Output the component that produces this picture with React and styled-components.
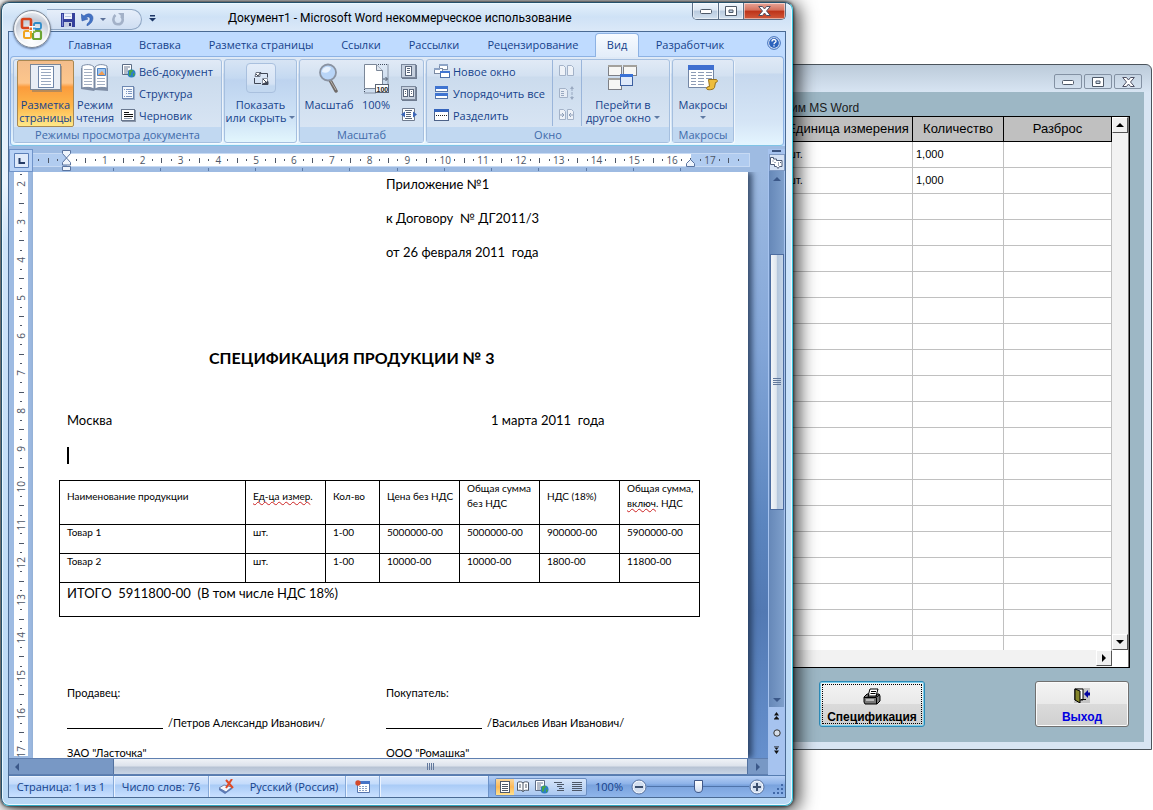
import React from 'react';
import styled, { createGlobalStyle, css } from 'styled-components';

const UI = "'Open Sans', 'Noto Sans', sans-serif";
const CAPTION = "Roboto, 'Open Sans', sans-serif";
const DOC = "Lato, 'Open Sans', sans-serif";
const ARIAL = "'Liberation Sans', Arial, sans-serif";

const GlobalStyle = createGlobalStyle`
  * { box-sizing: border-box; }
  body { margin: 0; background: #fff; }
  button { border: 0; padding: 0; margin: 0; background: none; font: inherit; color: inherit; }
  svg { display: block; flex: none; }
  p, h1, h2 { margin: 0; }
`;

const Desktop = styled.div`
  position: relative;
  height: 100vh;
  overflow: hidden;
  background: #fff;
`;

/* ---------- order window (behind) ---------- */

const OrderWindow = styled.section`
  position: absolute;
  left: 640px;
  right: 1px;
  top: 64px;
  bottom: 60px;
  display: flex;
  flex-direction: column;
  border: 1px solid #4b545c;
  border-radius: 6px 6px 0 0;
  background: linear-gradient(#bccbda, #d8e5f3 28px);
  padding: 0 7px 7px;
  font-family: ${ARIAL};
`;

const OrderCaption = styled.header`
  display: flex;
  justify-content: flex-end;
  gap: 2px;
  height: 27px;
  padding: 9px 2px 3px;
`;

const FrameButton = styled.button`
  display: flex;
  align-items: center;
  justify-content: center;
  width: 28px;
  border: 1px solid #8391a3;
  border-radius: 2px;
`;

const OrderBody = styled.div`
  flex: 1;
  min-height: 0;
  display: flex;
  flex-direction: column;
  background: #9db7c5;
  padding: 8px 14px 15px 0;
`;

const OrderLabel = styled.h2`
  padding-left: 143px;
  font-size: 12px;
  font-weight: normal;
  line-height: 16px;
  color: #1a1a1a;
`;

const GridFrame = styled.div`
  flex: 1;
  min-height: 0;
  display: flex;
  border: 1px solid #000;
  background: #fff;
`;

const GridMain = styled.div`
  flex: 1;
  display: flex;
  flex-direction: column;
  min-width: 0;
`;

const GridClip = styled.div`
  flex: 1;
  min-height: 0;
  overflow: hidden;
`;

const OrderGrid = styled.table`
  width: 100%;
  border-collapse: collapse;
  table-layout: fixed;
  th {
    height: 24px;
    padding: 0;
    background: #c0c0c0;
    border: solid #000;
    border-width: 0 1px 1px 0;
    font-size: 13px;
    font-weight: normal;
    white-space: nowrap;
  }
  td {
    height: 26px;
    padding: 0 3px;
    border: solid #c0c0c0;
    border-width: 0 1px 1px 0;
    font-size: 11px;
  }
`;

const OrderCol = styled.col`
  width: ${p => p.$w}px;
`;

const ClassicTrack = styled.div`
  display: flex;
  justify-content: flex-end;
  background: #f2f2f2;
  ${p =>
    p.$vertical
      ? css`
          flex: 1;
        `
      : css`
          height: 17px;
        `}
`;

const ClassicColumn = styled.div`
  display: flex;
  flex-direction: column;
  width: 17px;
  border-right: 1px solid #777;
`;

const ClassicCorner = styled.div`
  height: 17px;
  background: #fff;
`;

const ClassicArrow = styled.button`
  display: flex;
  align-items: center;
  justify-content: center;
  width: 16px;
  height: 16px;
  background: #f0f0f0;
  border: solid;
  border-width: 1px;
  border-color: #fff #555 #555 #fff;
`;

const OrderActions = styled.footer`
  display: flex;
  justify-content: space-between;
  padding: 13px 1px 0 171px;
`;

const ActionButton = styled.button`
  display: flex;
  flex-direction: column;
  align-items: center;
  justify-content: space-between;
  width: ${p => p.$w}px;
  height: 46px;
  padding: 6px 0 1px;
  border: 1px solid ${p => (p.$focus ? '#2c89b5' : '#707070')};
  border-radius: 3px;
  background: linear-gradient(#f4f4f4, #e9e9e9 50%, #dadada 51%, #d0d0d0);
  box-shadow: inset 0 0 0 1px ${p => (p.$focus ? '#7bd0ee' : '#fbfbfb')};
  outline: ${p => (p.$focus ? '1px dotted #000' : 'none')};
  outline-offset: -4px;
  color: ${p => p.$color};
  font-size: 12px;
  font-weight: bold;
  line-height: 16px;
`;

/* ---------- word window ---------- */

const WordWindow = styled.section`
  position: absolute;
  left: 1px;
  right: 360px;
  top: 2px;
  bottom: 4px;
  display: flex;
  flex-direction: column;
  border: 1px solid #24506b;
  border-right-color: #35c3dc;
  border-bottom-color: #2fa6c0;
  border-radius: 8px;
  padding: 0 6px 7px;
  background: linear-gradient(#e4f0fb 0, #cfe2f6 14px, #dbe9f8 28px, #eaf3fc 180px, #cfe4fa 240px, #b9d8f5 100%);
  box-shadow: inset 0 0 0 1px #e9f8ff, 0 0 3px 1px rgba(0, 0, 0, 0.6), 4px 3px 18px 2px rgba(0, 0, 0, 0.75);
  font-family: ${UI};
  font-size: 11px;
  color: #15428b;
`;

const TitleBar = styled.header`
  display: flex;
  align-items: flex-start;
  height: 28px;
`;

const QuickAccess = styled.div`
  display: flex;
  align-items: center;
  gap: 6px;
  height: 21px;
  width: 95px;
  margin: 6px 0 0 39px;
  padding-left: 14px;
  border: 1px solid #8fa6c3;
  border-left: 0;
  border-radius: 0 11px 11px 0;
  background: linear-gradient(#e6eefa, #cfdef2);
`;

const ToolButton = styled.button`
  display: flex;
  align-items: center;
  justify-content: center;
`;

const QatMore = styled(ToolButton)`
  margin: 12px 0 0 7px;
`;

const Title = styled.h1`
  flex: 1;
  padding: 7px 0 0 72px;
  font-family: ${CAPTION};
  font-size: 12px;
  font-weight: normal;
  line-height: 16px;
  white-space: nowrap;
  color: #000;
`;

const CaptionButtons = styled.div`
  display: flex;
  height: 17px;
  border: 1px solid #5b6e85;
  border-top: 0;
  border-radius: 0 0 5px 5px;
  overflow: hidden;
`;

const CaptionButton = styled.button`
  display: flex;
  align-items: center;
  justify-content: center;
  width: ${p => (p.$close ? 42 : 25)}px;
  border-left: ${p => (p.$first ? 0 : 1)}px solid #5b6e85;
  background: ${p =>
    p.$close
      ? 'linear-gradient(#e8a598, #d4705c 45%, #bd3218 50%, #d0593c)'
      : 'linear-gradient(#eef4fb, #dbe6f2 45%, #b9cbdf 50%, #d3e1ef)'};
  box-shadow: inset 0 0 0 1px rgba(255, 255, 255, 0.5);
`;

const Client = styled.div`
  flex: 1;
  min-height: 0;
  display: flex;
  flex-direction: column;
  border: 1px solid #4a6a93;
  background: #bfdbff;
`;

const OfficeButton = styled.button`
  position: absolute;
  left: 11px;
  top: 7px;
  width: 38px;
  height: 38px;
  display: flex;
  align-items: center;
  justify-content: center;
  border: 1px solid #7e8794;
  border-radius: 50%;
  background: radial-gradient(circle at 50% 85%, #fff, #eef1f5 35%, #c5cbd6 62%, #f2f5f9 90%);
  box-shadow: 0 1px 2px rgba(30, 50, 90, 0.6), inset 0 0 0 2px rgba(255, 255, 255, 0.7);
`;

const Tabs = styled.nav`
  display: flex;
  height: 24px;
  padding-left: 46px;
  align-items: stretch;
`;

const Tab = styled.button`
  width: ${p => p.$w}px;
  white-space: nowrap;
  ${p =>
    p.$active &&
    css`
      margin: 1px 2px -1px;
      padding-bottom: 2px;
      border: 1px solid #8db2e3;
      border-bottom: 0;
      border-radius: 4px 4px 0 0;
      background: linear-gradient(#f7fbff, #e3edf9);
      z-index: 1;
    `}
`;

const HelpButton = styled(ToolButton)`
  margin: 0 4px 3px auto;
`;

const Ribbon = styled.div`
  display: flex;
  gap: 2px;
  height: 90px;
  margin: 0 1px;
  padding: 2px;
  border: 1px solid #8db2e3;
  border-bottom-color: #7fc4e6;
  border-radius: 4px;
  background: linear-gradient(#dfe9f6, #d3e1f1 16px, #c6d8ee 17px, #d5e5f6 65px, #e4f5ff);
`;

const Group = styled.section`
  display: flex;
  flex-direction: column;
  width: ${p => p.$w}px;
  border: 1px solid #a5bfdf;
  border-radius: 3px;
  box-shadow: 1px 1px 0 rgba(255, 255, 255, 0.6);
  background: ${p =>
    p.$collapsed
      ? 'linear-gradient(#d7e4f4, #c4d9f1 18px, #bdd3ef 20px, #cfe3f6 60px, #e2f6fd)'
      : 'linear-gradient(#e1eaf6, #d3e1f1 16px, #cbdbed 17px, #dbe7f5)'};
`;

const GroupBody = styled.div`
  flex: 1;
  display: flex;
  align-items: flex-start;
  padding: 0 3px;
`;

const GroupCaption = styled.h2`
  height: 15px;
  font-size: 11px;
  font-weight: normal;
  line-height: 15px;
  text-align: center;
  white-space: nowrap;
  color: #3e6aaa;
  background: #c1d8f1;
`;

const BigButton = styled.button`
  display: flex;
  flex-direction: column;
  align-items: center;
  width: ${p => p.$w}px;
  height: 67px;
  line-height: 13px;
  white-space: nowrap;
  border: 1px solid ${p => (p.$on ? '#a98852' : 'transparent')};
  border-radius: 2px;
  background: ${p =>
    p.$on ? 'linear-gradient(#f3bd8b, #fdc68c 22px, #fb9b3c 26px, #fdb74b 45px, #ffe888)' : 'none'};
`;

const IconSlot = styled.span`
  display: flex;
  align-items: center;
  justify-content: center;
  height: 37px;
  padding-bottom: 3px;
`;

const ShowHideBox = styled.span`
  display: flex;
  align-items: center;
  justify-content: center;
  width: 30px;
  height: 30px;
  border: 1px solid #a9c0de;
  border-radius: 4px;
  background: linear-gradient(#e4edf9, #d4e2f4 20px, #c3d8f0 22px);
`;

const ButtonLine = styled.span`
  display: flex;
  align-items: center;
  gap: 3px;
  height: 13px;
`;

const SmallList = styled.div`
  display: flex;
  flex-direction: column;
  margin-left: ${p => p.$ml}px;
`;

const SmallButton = styled.button`
  display: flex;
  align-items: center;
  gap: 3px;
  height: 22px;
  white-space: nowrap;
`;

const DividedList = styled(SmallList)`
  padding: 0 6px;
  border: solid #9ab5da;
  border-width: 0 1px;
`;

const Caret = styled.span`
  width: 0;
  height: 0;
  border: solid transparent;
  border-width: 3px 3px 0;
  border-top-color: ${p => p.$color || '#5f7aa3'};
`;

/* ---------- work area ---------- */

const Workspace = styled.div`
  flex: 1;
  min-height: 0;
  display: flex;
  padding-top: 3px;
  background: #9ebbe2;
`;

const DocColumn = styled.div`
  flex: 1;
  min-width: 0;
  display: flex;
  flex-direction: column;
`;

const RulerRow = styled.div`
  display: flex;
  height: 23px;
  color: #3d4a5e;
`;

const TabSelector = styled.button`
  display: flex;
  align-items: center;
  justify-content: center;
  width: 24px;
  border: 1px solid #6f93c9;
  background: #b8d2f6;
`;

const RulerBody = styled.div`
  flex: 1;
  display: flex;
  flex-direction: column;
  padding-top: 4px;
  position: relative;
`;

const RulerScale = styled.div`
  display: flex;
  width: 717px;
  height: 14px;
  padding: 0 6px 0 1px;
  border: 1px solid #c7daf4;
  border-left: 0;
  background: linear-gradient(90deg, #b1ccf0 34px, #fff 34px, #fff 658px, #b1ccf0 658px);
`;

const VerticalScale = styled.div`
  display: flex;
  flex-direction: column;
  width: 14px;
  height: 586px;
  margin: -2px 0 0 5px;
  background: #fff;
`;

const Mark = styled.span`
  flex: 1;
  min-width: 0;
  min-height: 0;
  display: flex;
  align-items: center;
  justify-content: center;
  font-size: 10px;
  line-height: 12px;
  color: #4d5666;
  i {
    background: #4d5666;
    width: ${p => (p.$vertical ? p.$len : 1)}px;
    height: ${p => (p.$vertical ? 1 : p.$len)}px;
  }
  b {
    font-weight: normal;
    ${p => p.$vertical && 'writing-mode: vertical-rl; transform: rotate(180deg);'}
  }
`;

const TabStops = styled.div`
  display: flex;
  width: 614px;
  height: 3px;
  margin: 1px 0 0 34px;
  span {
    flex: 1;
    border-right: 1px solid #5d7ba8;
  }
`;

const IndentMarker = styled.span`
  position: absolute;
  left: ${p => p.$x}px;
  top: ${p => p.$y}px;
`;

const DocArea = styled.div`
  flex: 1;
  min-height: 0;
  display: flex;
  overflow: hidden;
  background: linear-gradient(#9ebbe2, #83a6d8 30%, #5b85bf 60%, #5279b3 75%, #6690cd);
`;

const VerticalRuler = styled.div`
  width: 24px;
  overflow: hidden;
  background: #9ebbe2;
`;

const Page = styled.article`
  flex: 1;
  margin-right: 20px;
  padding: 0 34px;
  background: #fff;
  box-shadow: 4px 0 6px rgba(30, 50, 80, 0.8);
  font-family: ${DOC};
  font-size: 13px;
  line-height: 24px;
  color: #000;
  white-space: pre;
`;

const Appendix = styled.div`
  display: grid;
  gap: 10px;
  margin-left: 319px;
`;

const DocTitle = styled.h1`
  margin: 82px 0 38px;
  padding-left: 142px;
  font-size: 16px;
  font-weight: bold;
`;

const PlaceDate = styled.div`
  display: grid;
  grid-template-columns: 424px 1fr;
`;

const TextCursor = styled.div`
  width: 2px;
  height: 17px;
  margin: 15px 0 16px;
  background: #000;
`;

const SpecTable = styled.table`
  width: 640px;
  margin-left: -8px;
  border-collapse: collapse;
  table-layout: fixed;
  font-size: 10px;
  line-height: 15px;
  text-align: left;
  th, td {
    padding: 0 0 0 7px;
    border: 1px solid #000;
    font-weight: normal;
  }
  th {
    height: 43px;
    padding-bottom: 13px;
  }
  td {
    height: 29px;
    vertical-align: top;
  }
  tfoot td {
    height: 34px;
    font-size: 13px;
    line-height: 20px;
  }
`;

const Col = styled.col`
  width: ${p => p.$w}px;
`;

const Misspelled = styled.span`
  text-decoration: underline wavy #c22 1px;
  text-underline-offset: 1px;
  text-decoration-skip-ink: none;
`;

const Signatures = styled.div`
  display: grid;
  grid-template-columns: 319px 1fr;
  margin-top: 61px;
  font-size: 11px;
  line-height: 30px;
`;

const SignLine = styled.span`
  display: inline-block;
  width: 96px;
  margin-right: 5px;
  border-bottom: 1px solid #000;
  height: 10px;
  vertical-align: -2px;
`;

/* ---------- scroll bars ---------- */

const HScroll = styled.div`
  display: flex;
  align-items: stretch;
  height: 17px;
  border: 1px solid #5f7fb0;
  border-width: 1px 0;
  background: #7898c5;
`;

const ScrollArrow = styled.button`
  display: flex;
  align-items: center;
  justify-content: center;
  width: ${p => p.$w || 16}px;
  height: ${p => p.$h || 15}px;
`;

const HThumb = styled.div`
  flex: 1;
  display: flex;
  align-items: center;
  justify-content: center;
  margin-left: 88px;
  border: 1px solid #52719f;
  border-width: 0 1px;
  background: linear-gradient(#f0f3f7, #dde3ec 45%, #b7c3d4 55%, #c9d5e5);
`;

const VColumn = styled.div`
  width: 17px;
  display: flex;
  flex-direction: column;
  align-items: center;
  padding-top: 1px;
  background: #a6c3ef;
`;

const SplitBar = styled.span`
  width: 9px;
  height: 2px;
  margin-bottom: 2px;
  background: #3b5480;
`;

const RulerToggle = styled.button`
  display: flex;
  align-items: center;
  justify-content: center;
  width: 16px;
  height: 17px;
  border: 1px solid #7f9ac4;
  background: #d5e2f5;
`;

const VTrack = styled.div`
  flex: 1;
  display: flex;
  flex-direction: column;
  align-items: center;
  width: 15px;
  background: linear-gradient(90deg, #6688b8, #7e9fcb);
`;

const VThumb = styled.div`
  width: 14px;
  height: 256px;
  margin: 68px 0 auto;
  display: flex;
  align-items: center;
  justify-content: center;
  border: 1px solid #4c6ca0;
  background: linear-gradient(90deg, #f2f5f9, #dfe6ee 45%, #b4c6dc 50%, #c5d5e8);
`;

const StatusBar = styled.footer`
  display: flex;
  align-items: stretch;
  height: 22px;
  border-top: 1px solid #567db1;
  box-shadow: inset 0 1px 0 #e9f2ff;
  background: linear-gradient(#d9e8fc, #c4dbfb 8px, #a9cbf6 9px, #c9e0ff);
`;

const StatusItem = styled.button`
  display: flex;
  align-items: center;
  justify-content: center;
  width: ${p => p.$w}px;
  white-space: nowrap;
  border-right: ${p => (p.$plain ? 0 : 1)}px solid #86a9d8;
  box-shadow: ${p => (p.$plain ? 'none' : '1px 0 0 #eaf3ff')};
`;

const StatusTools = styled.div`
  display: flex;
  align-items: center;
  margin-left: auto;
  padding-left: 6px;
  border-left: 1px solid #6c93c9;
  background: linear-gradient(#b5cff5, #8db2e8 8px, #79a2dd 9px, #8fb5ea);
`;

const ViewButtons = styled.div`
  display: flex;
  height: 18px;
  border: 1px solid #6b8ec2;
  border-radius: 2px;
  background: linear-gradient(#d6e5fa, #aac8f0);
`;

const ViewButton = styled.button`
  display: flex;
  align-items: center;
  justify-content: center;
  width: 18px;
  background: ${p => (p.$on ? 'linear-gradient(#fbd79a, #fdb956 50%, #ffe18d)' : 'none')};
`;

const ZoomValue = styled.button`
  width: 44px;
`;

const ZoomRange = styled.input`
  appearance: none;
  width: 102px;
  height: 14px;
  margin: 0;
  background: linear-gradient(#4f74ab, #4f74ab) center / 100% 1px no-repeat;
  &::-webkit-slider-thumb {
    appearance: none;
    width: 9px;
    height: 13px;
    border: 1px solid #41598a;
    border-radius: 1px 1px 5px 5px;
    background: linear-gradient(#fff, #cfdcf0);
  }
`;

const ResizeGrip = styled.span`
  display: flex;
  align-self: flex-end;
  padding: 0 1px 2px 8px;
`;

/* ---------- icons ---------- */

const OfficeLogo = () => (
  <svg width="24" height="24" viewBox="0 0 24 24" fill="none">
    <rect x="2" y="2" width="9" height="9" rx="1.5" stroke="#d8431c" strokeWidth="2.6" />
    <rect x="14" y="6" width="7" height="6" rx="1.5" stroke="#2d8bc9" strokeWidth="1.8" />
    <rect x="4" y="14" width="7" height="7" rx="1.5" stroke="#f0a31c" strokeWidth="2" />
    <rect x="13" y="14" width="8" height="8" rx="1.5" stroke="#6da534" strokeWidth="2.2" />
    <rect x="9" y="9" width="6" height="7" fill="#fff" />
    <path d="M9.5 10.5h2.5v2.5h-2.5z" fill="#e86b2a" />
    <path d="M13 10.5h2.5v2H13z" fill="#4a9ad2" />
    <path d="M9.5 14h2.5v2h-2.5z" fill="#f3b63a" />
    <path d="M13 13.7h2.5V16H13z" fill="#85b44b" />
  </svg>
);

const SaveIcon = () => (
  <svg width="14" height="14" viewBox="0 0 14 14" shapeRendering="crispEdges">
    <path d="M0 0h13l1 1v13H0z" fill="#34409c" />
    <path d="M1 1h1v12H1z" fill="#7b86d4" />
    <path d="M3 0h8v6H3z" fill="#eef2fb" />
    <path d="M3 0h8v1H3zM4 3h6v1H4z" fill="#b7c3df" />
    <path d="M3 9h8v5H3z" fill="#c5cce0" />
    <path d="M8 10h2v3H8z" fill="#2a3375" />
  </svg>
);

const UndoIcon = () => (
  <svg width="13" height="13" viewBox="0 0 13 13">
    <path d="M0 1l1 7 6-2-2-1c2-2 4-1 4 1s-1 3-3 5v2c4-2 6-5 6-8 0-4-5-6-9-2z" fill="#4372c4" stroke="#2b54a4" strokeWidth=".5" />
  </svg>
);

const RedoIcon = () => (
  <svg width="13" height="13" viewBox="0 0 13 13" fill="none">
    <path d="M3.500 2C0 5 1 11.300 6 11.300S12 5.500 9 3" stroke="#a3b1c8" strokeWidth="2.600" />
    <path d="M6 0h6v6z" fill="#a3b1c8" />
  </svg>
);

const MoreIcon = () => (
  <svg width="7" height="7" viewBox="0 0 7 7">
    <path d="M1 0h5v1.500H1zM0 3h7L3.500 6.500z" fill="#1d3767" />
  </svg>
);

const MinimizeIcon = () => (
  <svg width="12" height="6" viewBox="0 0 12 6">
    <rect x=".5" y="1.500" width="11" height="4" rx="1" fill="#fff" stroke="#4e5968" />
  </svg>
);

const MaximizeIcon = () => (
  <svg width="12" height="10" viewBox="0 0 12 10">
    <path fillRule="evenodd" d="M.5.5h11v9H.5zM4 4v2.500h4V4z" fill="#fff" stroke="#4e5968" />
  </svg>
);

const CloseIcon = () => (
  <svg width="13" height="10" viewBox="0 0 13 10">
    <path d="M.7.5h3.800l2 2.500 2-2.500h3.800L8.500 5l3.800 4.500H8.500l-2-2.500-2 2.500H.7L4.500 5z" fill="#fff" stroke="#4e5063" />
  </svg>
);

const HelpIcon = () => (
  <svg width="14" height="14" viewBox="0 0 14 14">
    <circle cx="7" cy="7" r="6.300" fill="#e6effc" stroke="#3566b5" />
    <circle cx="7" cy="7" r="4.900" fill="#2c62bd" />
    <path d="M5 5.500c0-2.600 4-2.600 4-.3C9 6.600 7 6.600 7 8.200M7 9.200v1.300" fill="none" stroke="#fff" strokeWidth="1.300" />
  </svg>
);

const PageLayoutIcon = () => (
  <svg width="32" height="28" viewBox="0 0 32 28" shapeRendering="crispEdges">
    <path d="M2 2h30v26H2z" fill="#8a7c6b" opacity=".6" />
    <path d="M.5.5h30v25H.5z" fill="#e9eef5" stroke="#7a8798" />
    <path d="M8.500 2.500h15v21h-15z" fill="#fff" stroke="#6f86a8" />
    <path d="M11 5.500h10M11 8.500h10M11 11.500h10M11 14.500h10M11 17.500h10M11 20.500h10" stroke="#9aa9c0" />
  </svg>
);

const ReadingIcon = () => (
  <svg width="30" height="28" viewBox="0 0 30 28">
    <path d="M1 4v21l13 2 1-1 13 1V4z" fill="#7f8ea6" />
    <path d="M2 2c4-2 9-2 12 1v22c-3-2-8-2-12-1z" fill="#fff" stroke="#7889a3" />
    <path d="M15 3c3-3 8-3 12-1v22c-4-1-9-1-12 1z" fill="#fff" stroke="#7889a3" />
    <path d="M4 5.500h8M4 8.500h8M4 11.500h8M4 14.500h8M4 17.500h8M4 20.500h8M17 14.500h8M17 17.500h8M17 20.500h8" stroke="#a3afc2" />
    <path d="M17.500 4.500h8v7h-8z" fill="#9fc6f0" stroke="#4d83c4" />
    <path d="M18 11l4-4 3 4z" fill="#f19c50" />
  </svg>
);

const WebIcon = () => (
  <svg width="15" height="14" viewBox="0 0 15 14">
    <path d="M1.500.5h9v10h-9z" fill="#fff" stroke="#5c6c86" />
    <path d="M3 3h6M3 5h4M3 7h5M3 9h3" stroke="#6a7892" />
    <circle cx="10.500" cy="9.500" r="4" fill="#2b7fc4" />
    <path d="M8 7c2-2 4-1 4 0l-2 2v2l-2 1zM12 9l2 1-2 3z" fill="#47a447" />
  </svg>
);

const OutlineIcon = () => (
  <svg width="15" height="14" viewBox="0 0 15 14" shapeRendering="crispEdges">
    <path d="M1.500.5h11v12h-11z" fill="#f4f8fd" stroke="#6d87b1" />
    <path d="M13 1h1v13H2v-1h11z" fill="#9fb0cc" />
    <path d="M3 3.500h1M5 3.500h6M5 5.500h1M7 5.500h4M5 7.500h1M7 7.500h4M3 10.500h1M5 10.500h6" stroke="#7f97c0" />
  </svg>
);

const DraftIcon = () => (
  <svg width="15" height="14" viewBox="0 0 15 14" shapeRendering="crispEdges">
    <path d="M.5 1.500h13v11H.5z" fill="#fff" stroke="#69788f" />
    <path d="M14 2h1v12H1v-1h13z" fill="#8b97aa" />
    <path d="M3 4.500h5M3 6.500h9M3 8.500h9" stroke="#111" />
    <path d="M3 10.500h8" stroke="#8b97aa" />
  </svg>
);

const ShowHideIcon = () => (
  <svg width="16" height="15" viewBox="0 0 16 15" fill="none" stroke="#3f4655">
    <path d="M7 2.500h7.500v4M1.500 7v5.500H8" />
    <path d="M3 1.500h4v4H2z" fill="#fff" stroke="#6d7584" />
    <path d="M3 3l2 2 3-4" />
    <path d="M9.500 7.500h5v5h-5z" fill="#fff" stroke="#8a92a0" />
    <path d="M10 8l4 4M9 13.500h6v-3z" fill="#3f4655" />
  </svg>
);

const ZoomIcon = () => (
  <svg width="22" height="30" viewBox="0 0 22 30">
    <path d="M12 17l6 11" stroke="#6f6a68" strokeWidth="3.500" strokeLinecap="round" />
    <path d="M12 17l6 10" stroke="#b9b4ae" strokeWidth="1" />
    <circle cx="10" cy="9.500" r="8" fill="#b9d5f7" stroke="#8a93a2" strokeWidth="1.800" />
    <path d="M4 9c0-4 5-7 9-4-1 4-5 6-9 4z" fill="#e8f2fe" />
  </svg>
);

const HundredIcon = () => (
  <svg width="27" height="31" viewBox="0 0 27 31">
    <path d="M15 1.500h10v20M1.500 24v6h11" fill="none" stroke="#3f4a5c" strokeDasharray="1 1" />
    <path d="M1.500 1.500h12l6 6v18h-18z" fill="#fff" stroke="#7b8798" />
    <path d="M13.500 1.500v6h6" fill="#dfe6ef" stroke="#7b8798" />
    <path d="M20 16h4M22.500 14l2 2-2 2" stroke="#4b5668" fill="none" />
    <rect x="12.500" y="21.500" width="13" height="8" fill="#fff" stroke="#5a6576" />
    <text x="13.500" y="28.500" fontFamily="Liberation Sans, sans-serif" fontSize="7" fontWeight="bold" fill="#222">100</text>
  </svg>
);

const OnePageIcon = () => (
  <svg width="16" height="15" viewBox="0 0 16 15" shapeRendering="crispEdges">
    <path d="M.5.5h14v13H.5z" fill="#c6d0de" stroke="#7b889c" />
    <path d="M15 1h1v14H1v-1h14z" fill="#6f7c90" />
    <path d="M4.500 2.500h6v9h-6z" fill="#fff" stroke="#59667b" />
    <path d="M6 4.500h3M6 6.500h3M6 8.500h3" stroke="#59667b" />
  </svg>
);

const TwoPagesIcon = () => (
  <svg width="16" height="15" viewBox="0 0 16 15" shapeRendering="crispEdges">
    <path d="M.5.5h14v13H.5z" fill="#c6d0de" stroke="#7b889c" />
    <path d="M15 1h1v14H1v-1h14z" fill="#6f7c90" />
    <path d="M2.500 3.500h4v7h-4zM8.500 3.500h4v7h-4z" fill="#fff" stroke="#59667b" />
    <path d="M4 5.500h1M4 7.500h1M10 5.500h1M10 7.500h1" stroke="#59667b" />
  </svg>
);

const PageWidthIcon = () => (
  <svg width="16" height="14" viewBox="0 0 16 14">
    <path d="M1.500.5h12v12h-12z" fill="#fff" stroke="#6f7b8e" />
    <path d="M4 2.500h7M4 10.500h7M5 4.500h5M5 6.500h5M5 8.500h5" stroke="#59667b" />
    <path d="M0 6.500l4-3v6zM16 6.500l-4-3v6z" fill="#3b66b8" />
  </svg>
);

const NewWindowIcon = () => (
  <svg width="16" height="15" viewBox="0 0 16 15" shapeRendering="crispEdges">
    <path d="M5.500.5h8v5h-8z" fill="#fff" stroke="#7c8ba3" />
    <path d="M.5 4.500h8v5h-8z" fill="#fff" stroke="#7c8ba3" />
    <path d="M6.500 7.500h9v6h-9z" fill="#fff" stroke="#4a6ea9" />
    <path d="M6 7h10v2H6z" fill="#3f74d1" />
    <path d="M5 0h9v2H5zM0 4h6v2H0z" fill="#8ea4c6" />
  </svg>
);

const ArrangeIcon = () => (
  <svg width="16" height="14" viewBox="0 0 16 14" shapeRendering="crispEdges">
    <path d="M1.500.5h12v5h-12zM1.500 7.500h12v5h-12z" fill="#fff" stroke="#5876a8" />
    <path d="M1 0h13v3H1zM1 7h13v3H1z" fill="#3f74d1" />
  </svg>
);

const SplitIcon = () => (
  <svg width="16" height="13" viewBox="0 0 16 13" shapeRendering="crispEdges">
    <path d="M.5.5h14v11H.5z" fill="#fff" stroke="#4d6288" />
    <path d="M0 0h15v3H0z" fill="#3565bd" />
    <path d="M2 6.500h12" stroke="#222" strokeDasharray="1 1" />
  </svg>
);

const SideBySideIcon = () => (
  <svg width="16" height="12" viewBox="0 0 16 12">
    <path d="M.5.5h4l2 2v8h-6zM8.500.5h4l2 2v8h-6z" fill="#eef2f8" stroke="#a3b2c8" />
  </svg>
);

const SyncScrollIcon = () => (
  <svg width="16" height="14" viewBox="0 0 16 14">
    <path d="M.5 2.500h6l2 2v7h-8z" fill="#e6ecf5" stroke="#a3b2c8" />
    <path d="M2 5.500h4M2 7.500h4M2 9.500h4M13 2v10" stroke="#98a8c0" strokeDasharray="3 1" />
    <path d="M11 3l2-3 2 3zM11 11l2 3 2-3z" fill="#98a8c0" />
  </svg>
);

const ResetWindowIcon = () => (
  <svg width="16" height="12" viewBox="0 0 16 12">
    <path d="M.5.5h4l2 2v8h-6zM8.500.5h4l2 2v8h-6z" fill="#eef2f8" stroke="#a3b2c8" />
    <path d="M1 6h4M3 4l2 2-2 2M14 6h-4M12 4l-2 2 2 2" fill="none" stroke="#8c9db7" />
  </svg>
);

const SwitchIcon = () => (
  <svg width="30" height="26" viewBox="0 0 30 26" shapeRendering="crispEdges">
    <path d="M.5.5h13v10H.5zM15.500.5h13v10h-13zM.5 13.500h13v11H.5z" fill="#f6f6f4" stroke="#7d7f85" />
    <path d="M0 0h14v2H0zM15 0h14v2H15zM0 13h14v2H0z" fill="#a3a19c" />
    <path d="M12.500 9.500h12v11h-12z" fill="#dfeafa" stroke="#3c5f9f" />
    <path d="M12 9h13v3H12z" fill="#3a72d6" />
  </svg>
);

const MacroIcon = () => (
  <svg width="30" height="26" viewBox="0 0 30 26">
    <path d="M.5.5h25v22H.5z" fill="#fff" stroke="#7487a5" />
    <path d="M0 0h26v5H0z" fill="#3f6fd0" />
    <path d="M3 7.500h5M3 10.500h5M3 13.500h5M3 16.500h5M3 19.500h5M10 7.500h6M10 10.500h6M10 13.500h6M10 16.500h6M10 19.500h6M18 7.500h6M18 10.500h6M18 13.500h6" stroke="#8c9bb5" />
    <path d="M20.500 14.500h8c1.500 1 1 3-1 3l-1 5c-.5 2.500-8 3-8 1s3-2 3-2z" fill="#eebd3c" stroke="#96701a" />
  </svg>
);

const Hourglass = () => (
  <svg width="9" height="22" viewBox="0 0 9 22">
    <path d="M.5.5h8v3l-4 4.500-4-4.500zM.5 15v-2.500L4.500 8l4 4.500V15z" fill="#eef4fc" stroke="#5a74a0" />
    <path d="M.5 16.500h8v4h-8z" fill="#eef4fc" stroke="#5a74a0" />
  </svg>
);

const RightIndent = () => (
  <svg width="9" height="8" viewBox="0 0 9 8">
    <path d="M.5 7.500V4.500l4-4 4 4v3z" fill="#eef4fc" stroke="#5a74a0" />
  </svg>
);

const ARROWS = {
  up: 'M0 6h8L4 2z',
  down: 'M0 2h8L4 6z',
  left: 'M6 0v8L2 4z',
  right: 'M2 0v8l4-4z',
};

const Arrow = ({ dir, color = '#3b5889', size = 8 }) => (
  <svg width={size} height={size} viewBox="0 0 8 8">
    <path d={ARROWS[dir]} fill={color} />
  </svg>
);

const SpellIcon = () => (
  <svg width="17" height="16" viewBox="0 0 17 16">
    <path d="M1 9l5-3 8 2-6 5z" fill="#f4f7fc" stroke="#7083a8" />
    <path d="M1 9v2l6 4 7-5V8l-6 5z" fill="#5b79b5" />
    <path d="M8 1l7 8M14 0L8 9" stroke="#e04a25" strokeWidth="2" />
  </svg>
);

const MacroRecordIcon = () => (
  <svg width="16" height="14" viewBox="0 0 16 14">
    <path d="M2.500 1.500h12v11h-12z" fill="#fff" stroke="#5675ad" />
    <path d="M2 1h13v3H2z" fill="#4573c6" />
    <path d="M4 6.500h9M4 8.500h9M4 10.500h9" stroke="#8aa0c6" strokeDasharray="2 1" />
    <circle cx="3" cy="3" r="2.700" fill="#d4492b" />
  </svg>
);

const LinesIcon = ({ page, indent }) => (
  <svg width="12" height="12" viewBox="0 0 12 12" shapeRendering="crispEdges">
    {page && <path d="M1.500.5h9v11h-9z" fill="#fff" stroke="#4d5868" />}
    <path
      d={
        page
          ? 'M3 3.500h6M3 5.500h6M3 7.500h6M3 9.500h6'
          : indent
          ? 'M1 1.500h8M4 3.500h7M4 5.500h5M6 7.500h5M4 9.500h7'
          : 'M1 1.500h10M1 3.500h10M1 5.500h10M1 7.500h10M1 9.500h10'
      }
      stroke="#4d5868"
    />
  </svg>
);

const BookIcon = () => (
  <svg width="12" height="12" viewBox="0 0 12 12">
    <path d="M.5 1.500C2 .5 5 .5 6 2c1-1.500 4-1.500 5.500-.5v8C10 9 7 9 6 10.500 5 9 2 9 .5 9.500zM6 2v9" fill="#fff" stroke="#4d5868" />
    <path d="M2 4h2M2 6h2M8 4h2M8 6h2" stroke="#4d5868" />
  </svg>
);

const RoundSign = ({ plus }) => (
  <svg width="16" height="16" viewBox="0 0 16 16">
    <circle cx="8" cy="8" r="7" fill="#f3f7fd" stroke="#54709f" />
    <circle cx="8" cy="8" r="5.500" fill="#d3dff0" />
    <path d={plus ? 'M4 8h8M8 4v8' : 'M4 8h8'} stroke="#3d506f" strokeWidth="2" />
  </svg>
);

const GripIcon = () => (
  <svg width="11" height="11" viewBox="0 0 11 11" fill="#4068a8">
    <path d="M8 0h2v2H8zM4 4h2v2H4zM8 4h2v2H8zM0 8h2v2H0zM4 8h2v2H4zM8 8h2v2H8z" />
  </svg>
);

const ThumbGrip = ({ vertical }) => (
  <svg width="8" height="8" viewBox="0 0 8 8" shapeRendering="crispEdges" stroke="#62789c">
    <path d={vertical ? 'M0 .5h8M0 2.500h8M0 4.500h8M0 6.500h8' : 'M.5 0v7M2.500 0v7M4.500 0v7M6.500 0v7'} />
  </svg>
);

const RulerToggleIcon = () => (
  <svg width="13" height="12" viewBox="0 0 13 12">
    <path d="M.5.5h3v1.500h3V3.500h5.500v6H9.500l-1.500 2-1.500-2h-2v-2h-4z" fill="#fff" stroke="#4b5a76" />
    <path d="M2.500 4h1M4.500 5.500h1M8 6h1M8 8h1M10 5.500h1" stroke="#4b5a76" />
  </svg>
);

const BrowsePrev = () => (
  <svg width="7" height="8" viewBox="0 0 7 8">
    <path d="M1 3.500L3.500 0 6 3.500zM1 7l2.500-3L6 7zM1 6.500h5v1H1z" fill="#111" />
  </svg>
);

const BrowseNext = () => (
  <svg width="7" height="8" viewBox="0 0 7 8">
    <path d="M1 4.500L3.500 8 6 4.500zM1 1l2.500 3L6 1zM1 .5h5v1H1z" fill="#111" />
  </svg>
);

const BrowseObject = () => (
  <svg width="8" height="8" viewBox="0 0 8 8">
    <circle cx="4" cy="4" r="3.200" fill="#d6dde8" stroke="#333" />
  </svg>
);

const PrinterIcon = () => (
  <svg width="18" height="17" viewBox="0 0 18 17">
    <path d="M5 8L7 1h8l-2 7z" fill="#fff" stroke="#000" />
    <path d="M8 3.500h5M7.500 5.500h5" stroke="#000" />
    <path d="M1 9l3-3h2l-1 3h8l1-3h2l1 2v5l-3 3H2l-1-2z" fill="#777" stroke="#000" />
    <path d="M1 9.500h12l4-3M13.500 10v6" stroke="#000" fill="none" />
    <path d="M3 12h8" stroke="#fff" />
  </svg>
);

const ExitIcon = () => (
  <svg width="16" height="15" viewBox="0 0 16 15">
    <path d="M0 0h16v15H0z" fill="#c5c5c5" />
    <path d="M1 1h8v11H1z" fill="#fff" stroke="#000" />
    <path d="M1 1l5 2v12l-5-3z" fill="#85852a" stroke="#000" />
    <path d="M7 11.500h5" stroke="#000" />
    <path d="M10 6l4-4v2.500h2v3h-2V10z" fill="#0000a0" />
  </svg>
);

/* ---------- data ---------- */

const TABS = [
  ['Главная', 70],
  ['Вставка', 70],
  ['Разметка страницы', 132],
  ['Ссылки', 68],
  ['Рассылки', 78],
  ['Рецензирование', 120],
  ['Вид', 44, true],
  ['Разработчик', 98],
];

const SPEC_COLUMNS = [186, 80, 54, 80, 80, 80, 80];

const SPEC_ROWS = [
  ['Товар 1', 'шт.', '1-00', '5000000-00', '5000000-00', '900000-00', '5900000-00'],
  ['Товар 2', 'шт.', '1-00', '10000-00', '10000-00', '1800-00', '11800-00'],
];

const ORDER_ROWS = Array.from({ length: 20 }, (_, i) =>
  i < 2 ? ['', 'шт.', '1,000', ''] : ['', '', '', '']
);

const Marks = ({ count, offset, vertical }) =>
  Array.from({ length: count }, (_, i) => {
    const pos = i + offset;
    const isNumber = pos % 4 === 0;
    return (
      <Mark key={i} $vertical={vertical} $len={Math.abs(pos % 4) === 2 ? 5 : 2}>
        {isNumber ? <b>{pos === 0 ? '' : pos / 4}</b> : <i />}
      </Mark>
    );
  });

const Small = ({ icon, children, ...rest }) => (
  <SmallButton type="button" {...rest}>
    {icon}
    {children}
  </SmallButton>
);

const Big = ({ icon, lines, caret, ...rest }) => (
  <BigButton type="button" {...rest}>
    <IconSlot>{icon}</IconSlot>
    {lines.map((line, i) => (
      <ButtonLine key={line}>
        {line}
        {caret && i === lines.length - 1 && <Caret />}
      </ButtonLine>
    ))}
  </BigButton>
);

const OrderPanel = () => (
  <OrderWindow>
    <OrderCaption>
      <FrameButton type="button" aria-label="Свернуть"><MinimizeIcon /></FrameButton>
      <FrameButton type="button" aria-label="Развернуть"><MaximizeIcon /></FrameButton>
      <FrameButton type="button" aria-label="Закрыть"><CloseIcon /></FrameButton>
    </OrderCaption>
    <OrderBody>
      <OrderLabel>им MS Word</OrderLabel>
      <GridFrame>
        <GridMain>
          <GridClip>
            <OrderGrid>
              <colgroup>
                <col />
                <OrderCol $w={129} />
                <OrderCol $w={91} />
                <OrderCol $w={108} />
              </colgroup>
              <thead>
                <tr>
                  <th />
                  <th>Единица измерения</th>
                  <th>Количество</th>
                  <th>Разброс</th>
                </tr>
              </thead>
              <tbody>
                {ORDER_ROWS.map((row, i) => (
                  <tr key={i}>
                    {row.map((cell, j) => <td key={j}>{cell}</td>)}
                  </tr>
                ))}
              </tbody>
            </OrderGrid>
          </GridClip>
          <ClassicTrack>
            <ClassicArrow type="button" aria-label="Вправо"><Arrow dir="right" color="#000" /></ClassicArrow>
          </ClassicTrack>
        </GridMain>
        <ClassicColumn>
          <ClassicArrow type="button" aria-label="Вверх"><Arrow dir="up" color="#000" /></ClassicArrow>
          <ClassicTrack $vertical />
          <ClassicArrow type="button" aria-label="Вниз"><Arrow dir="down" color="#000" /></ClassicArrow>
          <ClassicCorner />
        </ClassicColumn>
      </GridFrame>
      <OrderActions>
        <ActionButton type="button" $w={106} $focus $color="#000">
          <PrinterIcon />
          Спецификация
        </ActionButton>
        <ActionButton type="button" $w={94} $color="#0000e0">
          <ExitIcon />
          Выход
        </ActionButton>
      </OrderActions>
    </OrderBody>
  </OrderWindow>
);

const ViewRibbon = () => (
  <Ribbon>
    <Group $w={209}>
      <GroupBody>
        <Big $w={57} $on icon={<PageLayoutIcon />} lines={['Разметка', 'страницы']} />
        <Big $w={42} icon={<ReadingIcon />} lines={['Режим', 'чтения']} />
        <SmallList $ml={5}>
          <Small icon={<WebIcon />}>Веб-документ</Small>
          <Small icon={<OutlineIcon />}>Структура</Small>
          <Small icon={<DraftIcon />}>Черновик</Small>
        </SmallList>
      </GroupBody>
      <GroupCaption>Режимы просмотра документа</GroupCaption>
    </Group>
    <Group $w={73} $collapsed>
      <GroupBody>
        <Big
          $w={65}
          icon={<ShowHideBox><ShowHideIcon /></ShowHideBox>}
          lines={['Показать', 'или скрыть']}
          caret
        />
      </GroupBody>
    </Group>
    <Group $w={125}>
      <GroupBody>
        <Big $w={52} icon={<ZoomIcon />} lines={['Масштаб']} />
        <Big $w={42} icon={<HundredIcon />} lines={['100%']} />
        <SmallList $ml={4}>
          <Small aria-label="Одна страница" icon={<OnePageIcon />} />
          <Small aria-label="Две страницы" icon={<TwoPagesIcon />} />
          <Small aria-label="По ширине страницы" icon={<PageWidthIcon />} />
        </SmallList>
      </GroupBody>
      <GroupCaption>Масштаб</GroupCaption>
    </Group>
    <Group $w={244}>
      <GroupBody>
        <SmallList $ml={4}>
          <Small icon={<NewWindowIcon />}>Новое окно</Small>
          <Small icon={<ArrangeIcon />}>Упорядочить все</Small>
          <Small icon={<SplitIcon />}>Разделить</Small>
        </SmallList>
        <DividedList $ml={7}>
          <Small aria-label="Рядом" icon={<SideBySideIcon />} />
          <Small aria-label="Синхронная прокрутка" icon={<SyncScrollIcon />} />
          <Small aria-label="Восстановить окно" icon={<ResetWindowIcon />} />
        </DividedList>
        <Big $w={82} icon={<SwitchIcon />} lines={['Перейти в', 'другое окно']} caret />
      </GroupBody>
      <GroupCaption>Окно</GroupCaption>
    </Group>
    <Group $w={62}>
      <GroupBody>
        <BigButton type="button" $w={54}>
          <IconSlot><MacroIcon /></IconSlot>
          <ButtonLine>Макросы</ButtonLine>
          <ButtonLine><Caret /></ButtonLine>
        </BigButton>
      </GroupBody>
      <GroupCaption>Макросы</GroupCaption>
    </Group>
  </Ribbon>
);

const SpecDocument = () => (
  <Page>
    <Appendix>
      <p>Приложение №1</p>
      <p>к Договору  № ДГ2011/3</p>
      <p>от 26 февраля 2011  года</p>
    </Appendix>
    <DocTitle>СПЕЦИФИКАЦИЯ ПРОДУКЦИИ № 3</DocTitle>
    <PlaceDate>
      <span>Москва</span>
      <span>1 марта 2011  года</span>
    </PlaceDate>
    <TextCursor />
    <SpecTable>
      <colgroup>
        {SPEC_COLUMNS.map((w, i) => <Col key={i} $w={w} />)}
      </colgroup>
      <thead>
        <tr>
          <th>Наименование продукции</th>
          <th><Misspelled>Ед-ца измер</Misspelled>.</th>
          <th>Кол-во</th>
          <th>Цена без НДС</th>
          <th>Общая сумма<br />без НДС</th>
          <th>НДС (18%)</th>
          <th>Общая сумма,<br /><Misspelled>включ</Misspelled>. НДС</th>
        </tr>
      </thead>
      <tbody>
        {SPEC_ROWS.map(row => (
          <tr key={row[0]}>
            {row.map((cell, i) => <td key={i}>{cell}</td>)}
          </tr>
        ))}
      </tbody>
      <tfoot>
        <tr>
          <td colSpan="7">ИТОГО  5911800-00  (В том числе НДС 18%)</td>
        </tr>
      </tfoot>
    </SpecTable>
    <Signatures>
      <span>Продавец:</span>
      <span>Покупатель:</span>
      <span><SignLine />/Петров Александр Иванович/</span>
      <span><SignLine />/Васильев Иван Иванович/</span>
      <span>ЗАО "Ласточка"</span>
      <span>ООО "Ромашка"</span>
    </Signatures>
  </Page>
);

const App = () => (
  <Desktop>
    <GlobalStyle />
    <OrderPanel />
    <WordWindow>
      <TitleBar>
        <QuickAccess>
          <ToolButton type="button" aria-label="Сохранить"><SaveIcon /></ToolButton>
          <ToolButton type="button" aria-label="Отменить"><UndoIcon /></ToolButton>
          <Caret $color="#5c7199" />
          <ToolButton type="button" aria-label="Вернуть"><RedoIcon /></ToolButton>
        </QuickAccess>
        <QatMore type="button" aria-label="Настройка панели"><MoreIcon /></QatMore>
        <Title>Документ1 - Microsoft Word некоммерческое использование</Title>
        <CaptionButtons>
          <CaptionButton type="button" $first aria-label="Свернуть"><MinimizeIcon /></CaptionButton>
          <CaptionButton type="button" aria-label="Развернуть"><MaximizeIcon /></CaptionButton>
          <CaptionButton type="button" $close aria-label="Закрыть"><CloseIcon /></CaptionButton>
        </CaptionButtons>
      </TitleBar>
      <Client>
        <Tabs>
          {TABS.map(([name, w, active]) => (
            <Tab key={name} type="button" $w={w} $active={active}>{name}</Tab>
          ))}
          <HelpButton type="button" aria-label="Справка"><HelpIcon /></HelpButton>
        </Tabs>
        <ViewRibbon />
        <Workspace>
          <DocColumn>
            <RulerRow>
              <TabSelector type="button" aria-label="Табуляция">
                <svg width="15" height="15" viewBox="0 0 15 15">
                  <path d="M.5.5h14v14H.5z" fill="#dfeafa" stroke="#5b7fb8" />
                  <path d="M5.500 5v5H11" fill="none" stroke="#243b66" strokeWidth="2" />
                </svg>
              </TabSelector>
              <RulerBody>
                <RulerScale><Marks count={75} offset={-3} /></RulerScale>
                <TabStops>{Array.from({ length: 13 }, (_, i) => <span key={i} />)}</TabStops>
                <IndentMarker $x={29} $y={1}><Hourglass /></IndentMarker>
                <IndentMarker $x={653} $y={10}><RightIndent /></IndentMarker>
              </RulerBody>
            </RulerRow>
            <DocArea>
              <VerticalRuler>
                <VerticalScale><Marks count={62} offset={7} vertical /></VerticalScale>
              </VerticalRuler>
              <SpecDocument />
            </DocArea>
            <HScroll>
              <ScrollArrow type="button" aria-label="Влево"><Arrow dir="left" /></ScrollArrow>
              <HThumb><ThumbGrip /></HThumb>
              <ScrollArrow type="button" $w={20} aria-label="Вправо"><Arrow dir="right" /></ScrollArrow>
            </HScroll>
          </DocColumn>
          <VColumn>
            <SplitBar />
            <RulerToggle type="button" aria-label="Линейка"><RulerToggleIcon /></RulerToggle>
            <VTrack>
              <ScrollArrow type="button" aria-label="Вверх"><Arrow dir="up" /></ScrollArrow>
              <VThumb><ThumbGrip vertical /></VThumb>
              <ScrollArrow type="button" aria-label="Вниз"><Arrow dir="down" /></ScrollArrow>
            </VTrack>
            <ScrollArrow type="button" $h={17} aria-label="Предыдущая"><BrowsePrev /></ScrollArrow>
            <ScrollArrow type="button" $h={17} aria-label="Выбор объекта"><BrowseObject /></ScrollArrow>
            <ScrollArrow type="button" $h={17} aria-label="Следующая"><BrowseNext /></ScrollArrow>
            <ScrollArrow as="span" $h={17} />
          </VColumn>
        </Workspace>
        <StatusBar>
          <StatusItem type="button" $w={105}>Страница: 1 из 1</StatusItem>
          <StatusItem type="button" $w={95}>Число слов: 76</StatusItem>
          <StatusItem type="button" $w={34} $plain aria-label="Правописание"><SpellIcon /></StatusItem>
          <StatusItem type="button" $w={103}>Русский (Россия)</StatusItem>
          <StatusItem type="button" $w={34} aria-label="Запись макроса"><MacroRecordIcon /></StatusItem>
          <StatusTools>
            <ViewButtons>
              <ViewButton type="button" $on aria-label="Разметка страницы"><LinesIcon page /></ViewButton>
              <ViewButton type="button" aria-label="Режим чтения"><BookIcon /></ViewButton>
              <ViewButton type="button" aria-label="Веб-документ"><WebIcon /></ViewButton>
              <ViewButton type="button" aria-label="Структура"><LinesIcon indent /></ViewButton>
              <ViewButton type="button" aria-label="Черновик"><LinesIcon /></ViewButton>
            </ViewButtons>
            <ZoomValue type="button">100%</ZoomValue>
            <ToolButton type="button" aria-label="Уменьшить"><RoundSign /></ToolButton>
            <ZoomRange type="range" min="10" max="190" defaultValue="100" aria-label="Масштаб" />
            <ToolButton type="button" aria-label="Увеличить"><RoundSign plus /></ToolButton>
            <ResizeGrip><GripIcon /></ResizeGrip>
          </StatusTools>
        </StatusBar>
      </Client>
      <OfficeButton type="button" aria-label="Office"><OfficeLogo /></OfficeButton>
    </WordWindow>
  </Desktop>
);

export default App;
